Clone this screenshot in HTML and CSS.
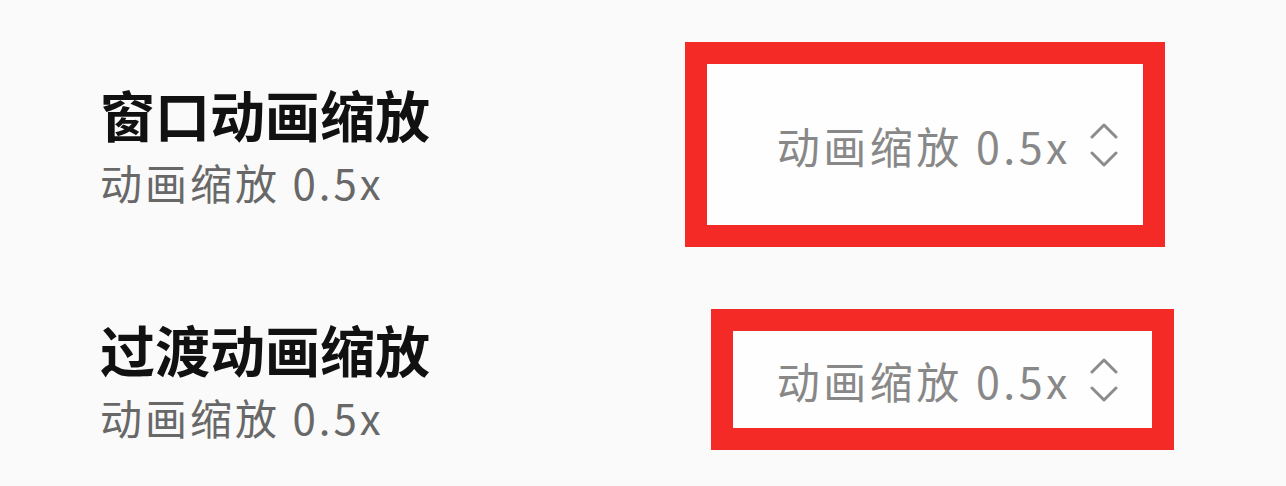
FILE: index.html
```html
<!DOCTYPE html>
<html lang="zh-CN">
<head>
<meta charset="utf-8">
<link rel="stylesheet" href="styles.css">
</head>
<body>
<div class="page">
  <div class="row row-first">
    <div class="label">
      <div class="title">窗口动画缩放</div>
      <div class="subtitle">动画缩放 0.5x</div>
    </div>
    <div class="mark mark-big">
      <span class="value">动画缩放 0.5x</span>
      <svg class="chev" width="28" height="46" viewBox="0 0 28 46"><polyline points="2,15 14,3 26,15" /><polyline points="2,31 14,43 26,31" /></svg>
    </div>
  </div>
  <div class="row row-second">
    <div class="label">
      <div class="title">过渡动画缩放</div>
      <div class="subtitle">动画缩放 0.5x</div>
    </div>
    <div class="mark mark-small">
      <span class="value">动画缩放 0.5x</span>
      <svg class="chev" width="28" height="46" viewBox="0 0 28 46"><polyline points="2,15 14,3 26,15" /><polyline points="2,31 14,43 26,31" /></svg>
    </div>
  </div>
</div>
</body>
</html>
```

FILE: styles.css
```css
html, body {
  margin: 0;
  padding: 0;
  background: #fafafa;
}
body {
  width: 1286px;
  height: 486px;
  overflow: hidden;
  font-family: "Noto Sans CJK SC", "Noto Sans", sans-serif;
}
.page {
  display: flex;
  flex-direction: column;
  padding-top: 42px;
}
.row {
  display: flex;
  align-items: center;
  justify-content: space-between;
  padding-left: 100px;
}
.row-first { padding-right: 121px; }
.row-second { padding-right: 112px; margin-top: 62px; }
.label {
  display: flex;
  flex-direction: column;
  gap: 18px;
}
.title {
  font-size: 55px;
  line-height: 56px;
  font-weight: 700;
  color: #111;
}
.subtitle {
  font-size: 42px;
  line-height: 46px;
  letter-spacing: 3px;
  color: #686868;
}
.mark {
  box-sizing: border-box;
  border: 22px solid #f42a26;
  background: #fefefe;
  display: flex;
  align-items: center;
  justify-content: flex-end;
  gap: 19px;
}
.mark-big { width: 480px; height: 205px; padding-right: 25px; }
.mark-small { width: 463px; height: 141px; padding-right: 34px; }
.value {
  font-size: 43px;
  line-height: 48px;
  letter-spacing: 3.5px;
  color: #888;
}
.chev polyline {
  fill: none;
  stroke: #8c8c8c;
  stroke-width: 3;
  stroke-linecap: round;
  stroke-linejoin: round;
}
```
